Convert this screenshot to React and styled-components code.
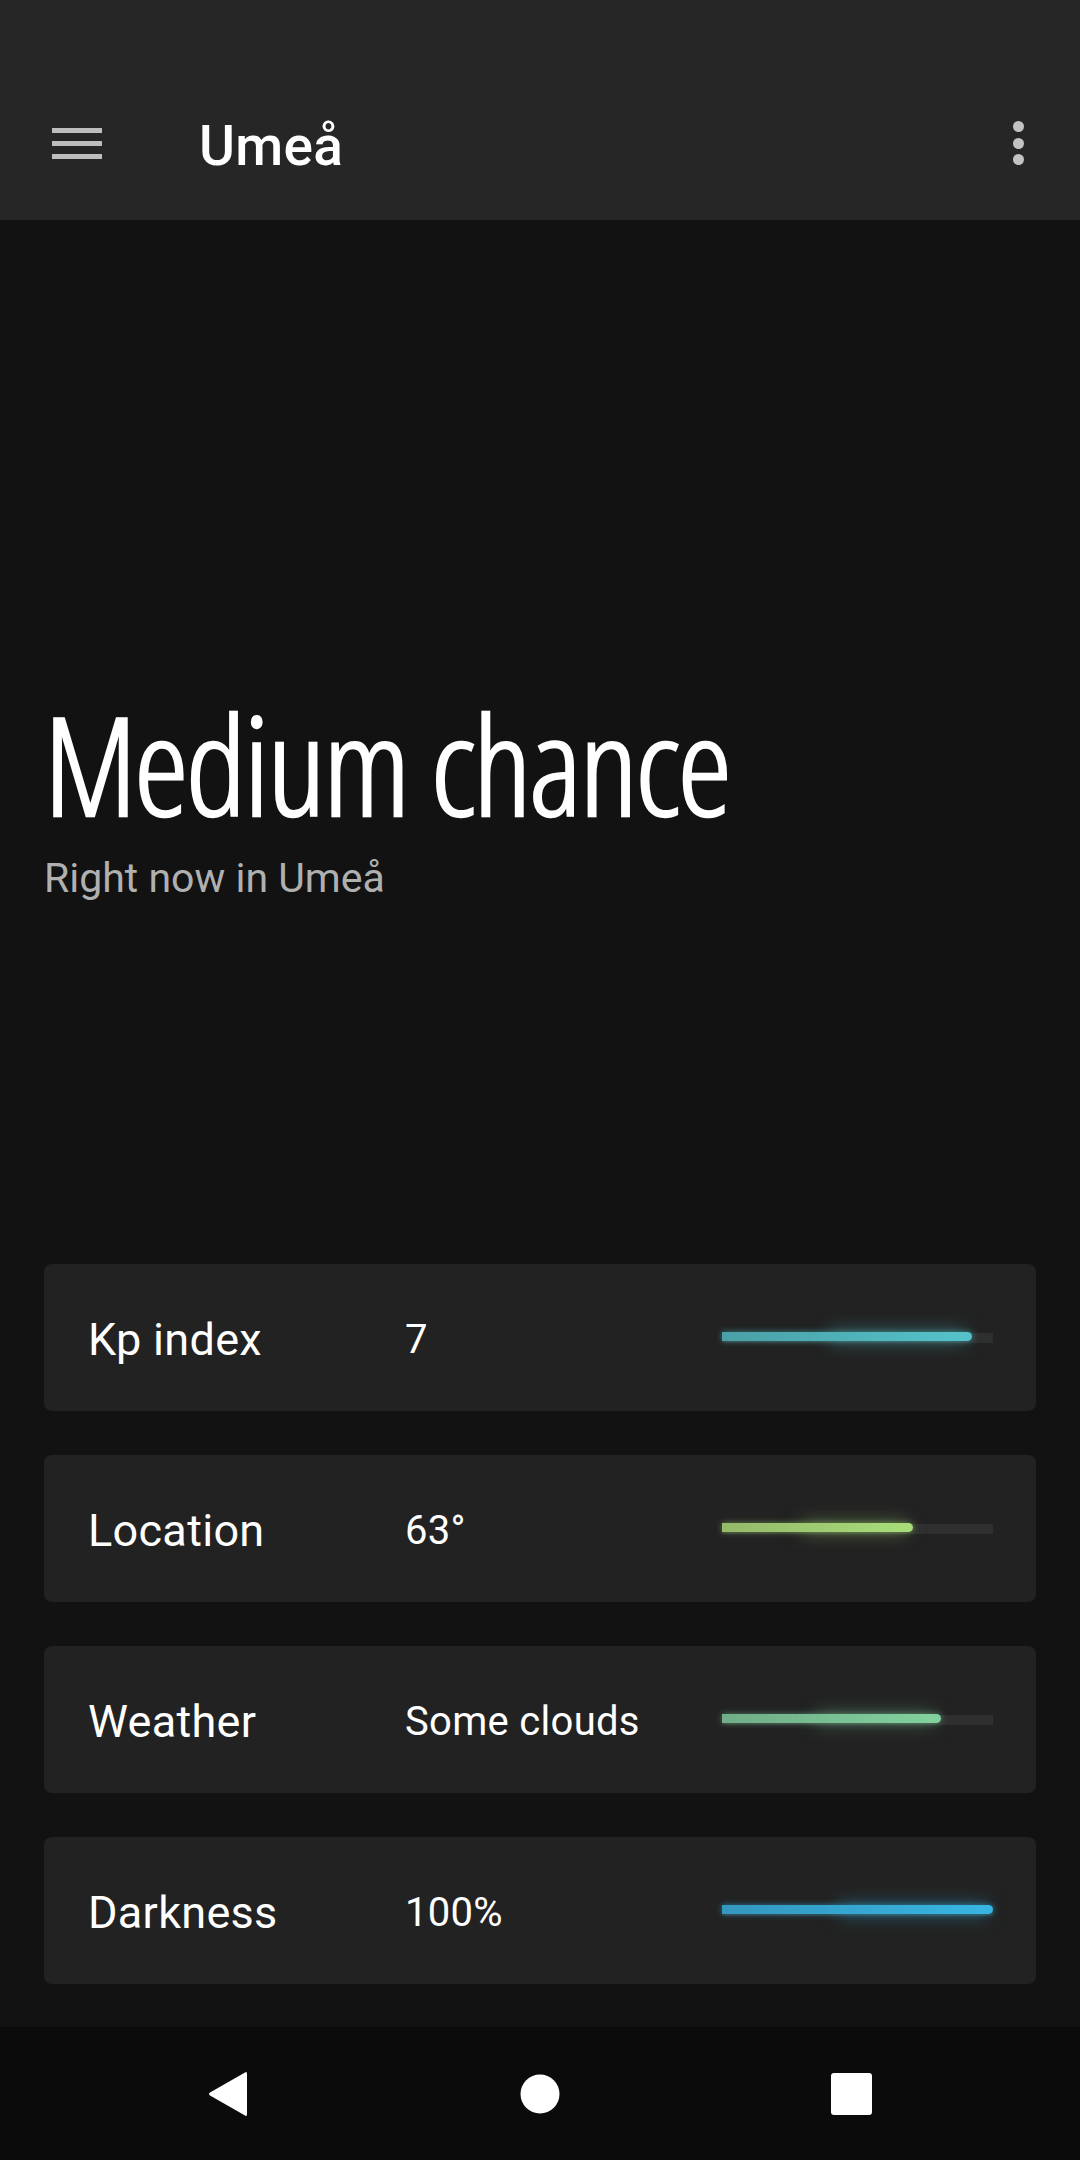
import React from "react";
import styled, { createGlobalStyle } from "styled-components";

const Global = createGlobalStyle`
  html, body { margin: 0; padding: 0; background: #121212; }
  body { font-family: Roboto, "Noto Sans", sans-serif; -webkit-font-smoothing: antialiased; }
  * { box-sizing: border-box; }
`;

const Screen = styled.div`
  width: 1080px;
  height: 2160px;
  display: flex;
  flex-direction: column;
  background: #121212;
  overflow: hidden;
`;

const Header = styled.header`
  height: 220px;
  flex: none;
  background: #262626;
  padding-top: 66px;
`;

const Toolbar = styled.div`
  height: 154px;
  display: flex;
  align-items: center;
  padding: 0 56px 0 52px;
`;

const Menu = styled.div`
  width: 50px;
  display: flex;
  flex-direction: column;
  gap: 8px;
  span {
    display: block;
    height: 5px;
    background: #bdbdbd;
  }
`;

const Title = styled.h1`
  margin: 6px 0 0 97px;
  font-family: Roboto, sans-serif;
  font-weight: 500;
  font-size: 55px;
  color: #ffffff;
  flex: 1;
  letter-spacing: 0.3px;
`;

const Kebab = styled.div`
  display: flex;
  flex-direction: column;
  gap: 5.5px;
  span {
    width: 11px;
    height: 11px;
    border-radius: 50%;
    background: #c2c2c2;
  }
`;

const Main = styled.main`
  flex: 1;
  padding: 0 44px;
  display: flex;
  flex-direction: column;
`;

const Hero = styled.section`
  margin-top: 475px;
`;

const Headline = styled.h2`
  margin: 0;
  font-family: "Open Sans", sans-serif;
  font-weight: 300;
  font-stretch: 75%;
  font-size: 137px;
  line-height: 1;
  color: #ffffff;
  -webkit-text-stroke: 2.4px #ffffff;
  letter-spacing: -2.4px;
  white-space: nowrap;
`;

const Sub = styled.p`
  margin: 22px 0 0 0;
  font-size: 41px;
  line-height: 48px;
  color: #b0b0b0;
`;

const Cards = styled.div`
  margin-top: 362px;
  display: flex;
  flex-direction: column;
  gap: 44px;
`;

const Card = styled.div`
  height: 147px;
  border-radius: 8px;
  background: #222222;
  display: grid;
  grid-template-columns: 317px 1fr 271px;
  align-items: center;
  padding: 0 43px 0 44px;
`;

const Label = styled.span`
  font-size: 45px;
  color: #ffffff;
  letter-spacing: 0.3px;
  padding-top: 3px;
`;

const Value = styled.span`
  font-size: 40px;
  color: #ffffff;
  letter-spacing: 0.3px;
  padding-top: 3px;
`;

const Track = styled.div`
  height: 10px;
  background: #2f2f2f;
  position: relative;
`;

const Fill = styled.div`
  position: relative;
  height: 9px;
  margin-top: -1px;
  border-radius: 0 5px 5px 0;
  background: linear-gradient(90deg, ${(p) => p.$from}, ${(p) => p.$to});
  box-shadow: 0 0 6px ${(p) => p.$glow};
  &::after {
    content: "";
    position: absolute;
    right: 6px;
    top: 0;
    width: 55%;
    height: 100%;
    border-radius: 10px;
    box-shadow: 0 0 18px 1px ${(p) => p.$glow};
    opacity: 0.8;
  }
`;

const NavBar = styled.nav`
  height: 133px;
  flex: none;
  background: #0b0b0b;
  display: flex;
  justify-content: center;
  align-items: center;
`;

const NavItem = styled.div`
  width: 312px;
  display: flex;
  justify-content: center;
  align-items: center;
`;

const rows = [
  { label: "Kp index", value: "7", pct: 92.3, from: "#4aa0a6", to: "#55c3cb", glow: "rgba(85,195,203,0.55)" },
  { label: "Location", value: "63°", pct: 70.5, from: "#95b96a", to: "#a8de7a", glow: "rgba(168,222,122,0.5)" },
  { label: "Weather", value: "Some clouds", pct: 80.8, from: "#70ad88", to: "#82d29f", glow: "rgba(130,210,159,0.5)" },
  { label: "Darkness", value: "100%", pct: 100, from: "#3497bf", to: "#38b6e3", glow: "rgba(56,182,227,0.55)" },
];

export default function App() {
  return (
    <>
      <Global />
      <Screen>
        <Header>
          <Toolbar>
            <Menu>
              <span />
              <span />
              <span />
            </Menu>
            <Title>Umeå</Title>
            <Kebab>
              <span />
              <span />
              <span />
            </Kebab>
          </Toolbar>
        </Header>
        <Main>
          <Hero>
            <Headline>Medium chance</Headline>
            <Sub>Right now in Umeå</Sub>
          </Hero>
          <Cards>
            {rows.map((r) => (
              <Card key={r.label}>
                <Label>{r.label}</Label>
                <Value>{r.value}</Value>
                <Track>
                  <Fill $from={r.from} $to={r.to} $glow={r.glow} style={{ width: `${r.pct}%` }} />
                </Track>
              </Card>
            ))}
          </Cards>
        </Main>
        <NavBar>
          <NavItem>
            <svg width="40" height="46" viewBox="0 0 40 46">
              <path d="M37 1.5 Q39 0 39 3 L39 43 Q39 46 37 44.5 L2 24.5 Q0 23 2 21.5 Z" fill="#fff" />
            </svg>
          </NavItem>
          <NavItem>
            <svg width="40" height="40" viewBox="0 0 40 40">
              <circle cx="20" cy="20" r="19.5" fill="#fff" />
            </svg>
          </NavItem>
          <NavItem>
            <svg width="42" height="42" viewBox="0 0 42 42">
              <rect x="0" y="0" width="41" height="42" rx="3" fill="#fff" />
            </svg>
          </NavItem>
        </NavBar>
      </Screen>
    </>
  );
}
